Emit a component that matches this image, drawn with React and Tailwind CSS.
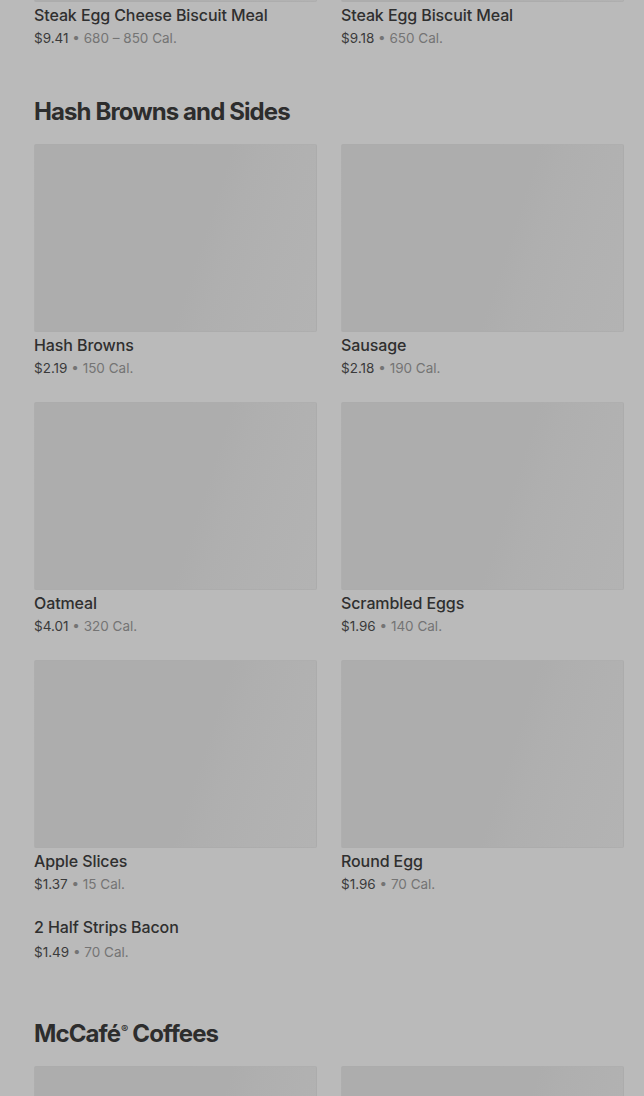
const font = { fontFamily: 'Inter, "Noto Sans", sans-serif' };

function Img() {
  return (
    <div className="h-[188px] w-full rounded-[2px] border border-[#a9a9a9]/40 bg-[linear-gradient(108deg,#adadad_0%,#adadad_58%,#afafaf_66%,#b1b1b1_80%,#b3b3b3_100%)]" />
  );
}

function Item({ name, price, cal, img = true }) {
  return (
    <div className="flex flex-col">
      {img && <Img />}
      <div className={`${img ? "mt-[1px] leading-6" : "leading-5 -mt-[1px]"} text-[16px] font-medium text-[#2f2f2f] tracking-[-0.1px]`}>{name}</div>
      <div className={`${img ? "" : "mt-[4px]"} text-[13.5px] leading-[22px] text-[#3a3a3a]`}>
        <span>{price}</span>
        <span className="text-[#747474]"> • {cal}</span>
      </div>
    </div>
  );
}

function Heading({ children }) {
  return (
    <h2 className="text-[24px] leading-8 font-bold tracking-[-0.9px] text-[#2d2d2d]">{children}</h2>
  );
}

export default function App() {
  return (
    <div style={font} className="h-[1096px] w-[644px] overflow-hidden bg-[#bababa] pl-[34px] pr-[20px]">
      <div className="-mt-[186px] grid grid-cols-2 gap-x-6">
        <Item name="Steak Egg Cheese Biscuit Meal" price="$9.41" cal="680 – 850 Cal." />
        <Item name="Steak Egg Biscuit Meal" price="$9.18" cal="650 Cal." />
      </div>

      <div className="mt-[47px]">
        <Heading>Hash Browns and Sides</Heading>
      </div>
      <div className="mt-[16px] grid grid-cols-2 gap-x-6 gap-y-[23px]">
        <Item name="Hash Browns" price="$2.19" cal="150 Cal." />
        <Item name="Sausage" price="$2.18" cal="190 Cal." />
        <Item name="Oatmeal" price="$4.01" cal="320 Cal." />
        <Item name="Scrambled Eggs" price="$1.96" cal="140 Cal." />
        <Item name="Apple Slices" price="$1.37" cal="15 Cal." />
        <Item name="Round Egg" price="$1.96" cal="70 Cal." />
        <Item name="2 Half Strips Bacon" price="$1.49" cal="70 Cal." img={false} />
      </div>

      <div className="mt-[55px]">
        <Heading>
          McCafé<span className="relative -top-[9px] ml-[1px] align-baseline text-[11px] leading-none font-bold">®</span> Coffees
        </Heading>
      </div>
      <div className="mt-[16px] grid grid-cols-2 gap-x-6">
        <Img />
        <Img />
      </div>
    </div>
  );
}
